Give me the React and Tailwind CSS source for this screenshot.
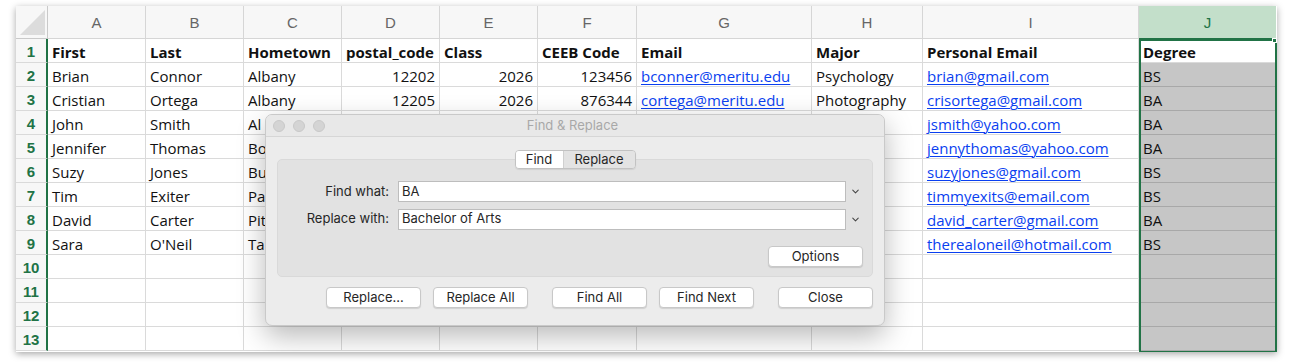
import { ChevronDown } from "lucide-react";

const columns = [
  { key: "A", w: "w-[98px]" },
  { key: "B", w: "w-[98px]" },
  { key: "C", w: "w-[98px]" },
  { key: "D", w: "w-[98px]" },
  { key: "E", w: "w-[98px]" },
  { key: "F", w: "w-[99px]" },
  { key: "G", w: "w-[175px]" },
  { key: "H", w: "w-[111px]" },
  { key: "I", w: "w-[216px]" },
  { key: "J", w: "w-[137px]" },
];

const header = ["First", "Last", "Hometown", "postal_code", "Class", "CEEB Code", "Email", "Major", "Personal Email", "Degree"];

// cells hidden behind the dialog are left empty
const rows = [
  ["Brian", "Connor", "Albany", "12202", "2026", "123456", "bconner@meritu.edu", "Psychology", "brian@gmail.com", "BS"],
  ["Cristian", "Ortega", "Albany", "12205", "2026", "876344", "cortega@meritu.edu", "Photography", "crisortega@gmail.com", "BA"],
  ["John", "Smith", "Al", "", "", "", "", "", "jsmith@yahoo.com", "BA"],
  ["Jennifer", "Thomas", "Bo", "", "", "", "", "", "jennythomas@yahoo.com", "BA"],
  ["Suzy", "Jones", "Bu", "", "", "", "", "", "suzyjones@gmail.com", "BS"],
  ["Tim", "Exiter", "Pa", "", "", "", "", "", "timmyexits@email.com", "BS"],
  ["David", "Carter", "Pit", "", "", "", "", "", "david_carter@gmail.com", "BA"],
  ["Sara", "O'Neil", "Ta", "", "", "", "", "", "therealoneil@hotmail.com", "BS"],
  [], [], [], [],
];

const numeric = [3, 4, 5];
const links = [6, 8];

function Cell({ col, i, value, bold, rowIndex }) {
  const selected = i === 9 && rowIndex > 0;
  return (
    <div
      className={`${col.w} h-[24px] shrink-0 flex items-center pt-[3px] px-[4px] border-r border-b whitespace-nowrap ${
        selected ? "bg-[#c6c6c6] border-[#a8a8a8]" : "bg-white border-[#dadada]"
      } ${numeric.includes(i) && !bold ? "justify-end" : ""} ${bold ? "font-bold" : ""}`}
    >
      {value &&
        (links.includes(i) && !bold ? (
          <span className="text-[#0a3ff0] underline underline-offset-2 decoration-1">{value}</span>
        ) : (
          <span className="text-[#111]">{value}</span>
        ))}
    </div>
  );
}

function Button({ children, className = "" }) {
  return (
    <button className={`w-[95px] h-[21px] rounded-[4px] bg-white border border-[#c8c8c8] shadow-[0_1px_1px_rgba(0,0,0,0.12)] text-[13px] text-[#262626] leading-none ${className}`}>
      {children}
    </button>
  );
}

function FindReplace() {
  return (
    <div className="absolute left-[249px] top-[108px] w-[620px] h-[212px] rounded-[7px] bg-[#ececec] border border-[#c9c9c9] shadow-[0_10px_28px_rgba(0,0,0,0.28)] overflow-hidden font-['Inter','Liberation_Sans',sans-serif]">
      <div className="relative h-[22px] flex items-center border-b border-[#d6d6d6] bg-[#e8e8e8]">
        <div className="flex gap-[8px] pl-[7px]">
          <span className="w-[12px] h-[12px] rounded-full bg-[#d4d4d4] border border-[#c8c8c8]" />
          <span className="w-[12px] h-[12px] rounded-full bg-[#d4d4d4] border border-[#c8c8c8]" />
          <span className="w-[12px] h-[12px] rounded-full bg-[#d4d4d4] border border-[#c8c8c8]" />
        </div>
        <div className="flex-1 text-center text-[13px] text-[#a8a8a8] pr-[64px]">Find &amp; Replace</div>
      </div>

      <div className="px-[11px] pt-[13px]">
        <div className="relative z-10 mx-auto flex w-[121px] h-[19px] rounded-[4px] border border-[#c2c2c2] overflow-hidden text-[13px] text-[#262626] shadow-[0_1px_1px_rgba(0,0,0,0.08)]">
          <div className="w-[48px] bg-white flex items-center justify-center border-r border-[#d0d0d0]">Find</div>
          <div className="flex-1 bg-[#e3e3e3] flex items-center justify-center">Replace</div>
        </div>

        <div className="-mt-[10px] h-[118px] rounded-[5px] bg-[#e2e2e2] border border-[#d9d9d9] pt-[21px] pr-[9px] text-[13px] text-[#262626]">
          <div className="flex items-center h-[21px]">
            <div className="w-[111px] text-right">Find what:</div>
            <div className="ml-[9px] w-[448px] h-[21px] bg-white border border-[#bdbdbd] flex items-center px-[3px]">BA</div>
            <ChevronDown size={11} strokeWidth={2.2} className="ml-[4px] text-[#444]" />
          </div>
          <div className="flex items-center h-[20px] mt-[7px]">
            <div className="w-[111px] text-right">Replace with:</div>
            <div className="ml-[9px] w-[448px] h-[21px] bg-white border border-[#bdbdbd] flex items-center px-[3px]">Bachelor of Arts</div>
            <ChevronDown size={11} strokeWidth={2.2} className="ml-[4px] text-[#444]" />
          </div>
          <div className="flex justify-end mt-[17px]">
            <Button>Options</Button>
          </div>
        </div>

        <div className="flex mt-[10px] pl-[49px]">
          <Button>Replace...</Button>
          <Button className="ml-[12px]">Replace All</Button>
          <Button className="ml-[24px]">Find All</Button>
          <Button className="ml-[12px]">Find Next</Button>
          <Button className="ml-[24px]">Close</Button>
        </div>
      </div>
    </div>
  );
}

export default function App() {
  return (
    <div className="w-[1289px] h-[364px] bg-white pl-[16px] pt-[6px]">
      <div className="relative w-[1261px] h-[346px] bg-white shadow-[0_2px_7px_rgba(0,0,0,0.35)] overflow-hidden">
        {/* column letters */}
        <div className="flex h-[33px] font-['Liberation_Sans',sans-serif] text-[15px] text-[#666]">
          <div className="relative w-[32px] shrink-0 bg-[#f7f7f7] border-r border-b border-[#c9c9c9]">
            <svg className="absolute left-[3px] top-[3px]" width="27" height="27" viewBox="0 0 27 27">
              <polygon points="1,26 26,26 26,1" fill="#dcdcdc" />
            </svg>
          </div>
          {columns.map((c) =>
            c.key === "J" ? (
              <div key={c.key} className={`${c.w} shrink-0 flex items-center justify-center pt-[2px] bg-[#c3dfca] text-[#217346] border-b border-[#217346]`}>
                {c.key}
              </div>
            ) : (
              <div key={c.key} className={`${c.w} shrink-0 flex items-center justify-center pt-[2px] bg-[#f7f7f7] border-r border-b border-[#d6d6d6]`}>
                {c.key}
              </div>
            )
          )}
        </div>

        {/* rows */}
        <div className="font-['Open_Sans',sans-serif] text-[15px]">
          {[header, ...rows].map((row, r) => (
            <div key={r} className="flex">
              <div className="w-[32px] h-[24px] shrink-0 flex items-center justify-center pt-[3px] bg-[#f7f7f7] border-b border-[#dadada] border-r-2 border-r-[#217346] font-['Liberation_Sans',sans-serif] text-[15px] font-semibold text-[#217346]">
                {r + 1}
              </div>
              {columns.map((c, i) => (
                <Cell key={c.key} col={c} i={i} value={row[i]} bold={r === 0} rowIndex={r} />
              ))}
            </div>
          ))}
        </div>

        {/* selected column J */}
        <div className="absolute left-[1123px] top-[33px] w-[138px] h-[314px] border-2 border-[#217346] pointer-events-none" />
        <div className="absolute left-[1256px] top-[32px] w-[5px] h-[5px] bg-[#217346] border border-white" />

        <FindReplace />
      </div>
    </div>
  );
}
